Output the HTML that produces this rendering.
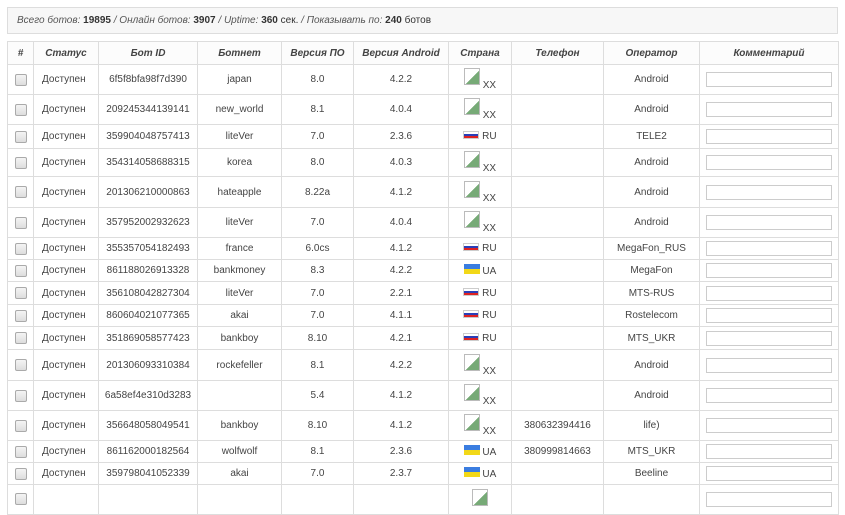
<!DOCTYPE html>
<html><head><meta charset="utf-8"><style>
body{margin:0;background:#fff;font-family:"Liberation Sans",Arial,sans-serif;font-size:10px;color:#444;width:845px;height:496px;overflow:hidden;position:relative}
.info{position:absolute;left:7px;top:7px;width:829px;height:25px;border:1px solid #ddd;background:#f7f7f7;line-height:25px;font-style:italic;color:#555;font-size:10px}
.info span{margin-left:9px}
.info b{font-style:normal;color:#333}
table{position:absolute;left:7px;top:41px;border-collapse:collapse;table-layout:fixed;width:831px}
td,th{border:1px solid #ddd;text-align:center;padding:0;overflow:hidden;white-space:nowrap}
th{font-style:italic;font-weight:bold;color:#444;height:22px;background:#fcfcfc}
td:nth-child(2){text-align:left;padding-left:8px}
.cb{display:inline-block;width:10px;height:10px;border:1px solid #aaa;border-radius:2px;background:linear-gradient(#f4f4f4,#ddd);vertical-align:middle}
.inp{display:inline-block;width:124px;height:13px;border:1px solid #ccc;vertical-align:middle}
.img{display:inline-block;width:14px;height:15px;border:1px solid #bbb;background:linear-gradient(135deg,#fff 55%,#7a7 55%);vertical-align:-2px}
.xx{font-size:10px;vertical-align:-5px}
.ru{display:inline-block;width:16px;height:8px;background:linear-gradient(#fff 33%,#2a3fb8 33%,#2a3fb8 66%,#d22 66%);vertical-align:0;border:1px solid #ccc;box-sizing:border-box}
.ua{display:inline-block;width:16px;height:10px;background:linear-gradient(#3a7de0 50%,#f2d818 50%);vertical-align:0}
</style></head><body>
<div class="info"><span>Всего ботов: <b>19895</b> / Онлайн ботов: <b>3907</b> / Uptime: <b>360</b> <b style="font-weight:normal">сек.</b> / Показывать по: <b>240</b> <b style="font-weight:normal">ботов</b></span></div>
<table>
<colgroup><col style="width:26px"><col style="width:65px"><col style="width:99px"><col style="width:84px"><col style="width:72px"><col style="width:95px"><col style="width:63px"><col style="width:92px"><col style="width:96px"><col style="width:139px"></colgroup>
<tr><th>#</th><th style="text-align:center">Статус</th><th>Бот ID</th><th>Ботнет</th><th>Версия ПО</th><th>Версия Android</th><th>Страна</th><th>Телефон</th><th>Оператор</th><th>Комментарий</th></tr>
<tr style="height:30px"><td><span class="cb"></span></td><td>Доступен</td><td>6f5f8bfa98f7d390</td><td>japan</td><td>8.0</td><td>4.2.2</td><td><span class="img"></span> <span class="xx">XX</span></td><td></td><td>Android</td><td><span class="inp"></span></td></tr>
<tr style="height:30px"><td><span class="cb"></span></td><td>Доступен</td><td>209245344139141</td><td>new_world</td><td>8.1</td><td>4.0.4</td><td><span class="img"></span> <span class="xx">XX</span></td><td></td><td>Android</td><td><span class="inp"></span></td></tr>
<tr style="height:24px"><td><span class="cb"></span></td><td>Доступен</td><td>359904048757413</td><td>liteVer</td><td>7.0</td><td>2.3.6</td><td><span class="ru"></span> RU</td><td></td><td>TELE2</td><td><span class="inp"></span></td></tr>
<tr style="height:28px"><td><span class="cb"></span></td><td>Доступен</td><td>354314058688315</td><td>korea</td><td>8.0</td><td>4.0.3</td><td><span class="img"></span> <span class="xx">XX</span></td><td></td><td>Android</td><td><span class="inp"></span></td></tr>
<tr style="height:31px"><td><span class="cb"></span></td><td>Доступен</td><td>201306210000863</td><td>hateapple</td><td>8.22a</td><td>4.1.2</td><td><span class="img"></span> <span class="xx">XX</span></td><td></td><td>Android</td><td><span class="inp"></span></td></tr>
<tr style="height:30px"><td><span class="cb"></span></td><td>Доступен</td><td>357952002932623</td><td>liteVer</td><td>7.0</td><td>4.0.4</td><td><span class="img"></span> <span class="xx">XX</span></td><td></td><td>Android</td><td><span class="inp"></span></td></tr>
<tr style="height:22px"><td><span class="cb"></span></td><td>Доступен</td><td>355357054182493</td><td>france</td><td>6.0cs</td><td>4.1.2</td><td><span class="ru"></span> RU</td><td></td><td>MegaFon_RUS</td><td><span class="inp"></span></td></tr>
<tr style="height:22px"><td><span class="cb"></span></td><td>Доступен</td><td>861188026913328</td><td>bankmoney</td><td>8.3</td><td>4.2.2</td><td><span class="ua"></span> UA</td><td></td><td>MegaFon</td><td><span class="inp"></span></td></tr>
<tr style="height:23px"><td><span class="cb"></span></td><td>Доступен</td><td>356108042827304</td><td>liteVer</td><td>7.0</td><td>2.2.1</td><td><span class="ru"></span> RU</td><td></td><td>MTS-RUS</td><td><span class="inp"></span></td></tr>
<tr style="height:22px"><td><span class="cb"></span></td><td>Доступен</td><td>860604021077365</td><td>akai</td><td>7.0</td><td>4.1.1</td><td><span class="ru"></span> RU</td><td></td><td>Rostelecom</td><td><span class="inp"></span></td></tr>
<tr style="height:23px"><td><span class="cb"></span></td><td>Доступен</td><td>351869058577423</td><td>bankboy</td><td>8.10</td><td>4.2.1</td><td><span class="ru"></span> RU</td><td></td><td>MTS_UKR</td><td><span class="inp"></span></td></tr>
<tr style="height:31px"><td><span class="cb"></span></td><td>Доступен</td><td>201306093310384</td><td>rockefeller</td><td>8.1</td><td>4.2.2</td><td><span class="img"></span> <span class="xx">XX</span></td><td></td><td>Android</td><td><span class="inp"></span></td></tr>
<tr style="height:30px"><td><span class="cb"></span></td><td>Доступен</td><td>6a58ef4e310d3283</td><td></td><td>5.4</td><td>4.1.2</td><td><span class="img"></span> <span class="xx">XX</span></td><td></td><td>Android</td><td><span class="inp"></span></td></tr>
<tr style="height:30px"><td><span class="cb"></span></td><td>Доступен</td><td>356648058049541</td><td>bankboy</td><td>8.10</td><td>4.1.2</td><td><span class="img"></span> <span class="xx">XX</span></td><td>380632394416</td><td>life)</td><td><span class="inp"></span></td></tr>
<tr style="height:22px"><td><span class="cb"></span></td><td>Доступен</td><td>861162000182564</td><td>wolfwolf</td><td>8.1</td><td>2.3.6</td><td><span class="ua"></span> UA</td><td>380999814663</td><td>MTS_UKR</td><td><span class="inp"></span></td></tr>
<tr style="height:22px"><td><span class="cb"></span></td><td>Доступен</td><td>359798041052339</td><td>akai</td><td>7.0</td><td>2.3.7</td><td><span class="ua"></span> UA</td><td></td><td>Beeline</td><td><span class="inp"></span></td></tr>
<tr style="height:30px;vertical-align:top"><td><span class="cb" style="margin-top:8px"></span></td><td></td><td></td><td></td><td></td><td></td><td><span class="img" style="margin-top:4px"></span></td><td></td><td></td><td><span class="inp" style="margin-top:7px"></span></td></tr>
</table>
</body></html>
